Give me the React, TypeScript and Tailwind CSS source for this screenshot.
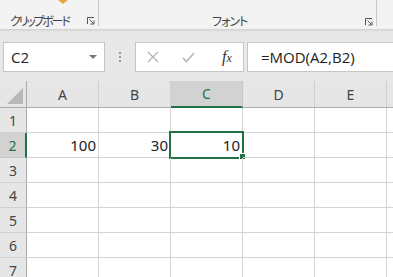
import React from "react";

const Launcher = () => (
  <svg width="8" height="8" viewBox="0 0 8 8" className="block">
    <path d="M0.5 7V0.5H7" fill="none" stroke="#555" strokeWidth="1" />
    <path d="M2.5 2.5L6.5 6.5" fill="none" stroke="#555" strokeWidth="1" />
    <path d="M7 3.5V7H3.5" fill="none" stroke="#555" strokeWidth="1" />
  </svg>
);

const cols = ["A", "B", "C", "D", "E", ""];
const rows = [1, 2, 3, 4, 5, 6, 7];

export default function App() {
  return (
    <div className="w-[393px] h-[277px] overflow-hidden bg-white flex flex-col">
      {/* Ribbon */}
      <div className="h-[29px] shrink-0 bg-[#f3f3f3] flex text-[#444] [font-family:'Noto_Sans_CJK_JP',sans-serif] [font-feature-settings:'palt'] text-[12px] leading-[16px]">
        <div className="relative w-[98px] flex items-end">
          <div className="absolute left-[58px] top-0 w-0 h-0 border-l-[5px] border-r-[5px] border-t-[4px] border-l-transparent border-r-transparent border-t-[#e8a73e]" />
          <span className="pl-[10px] tracking-[-2.2px] whitespace-nowrap">クリップボード</span>
          <div className="ml-auto mr-[3px] mb-[4px]">
            <Launcher />
          </div>
        </div>
        <div className="w-px h-[26px] bg-[#c8c8c8]" />
        <div className="w-[277px] flex items-end">
          <span className="ml-[113px] tracking-[-1px] whitespace-nowrap">フォント</span>
          <div className="ml-auto mr-[3px] mb-[3px]">
            <Launcher />
          </div>
        </div>
        <div className="w-px h-[26px] bg-[#c8c8c8]" />
        <div className="flex-1" />
      </div>

      {/* Formula bar */}
      <div className="h-[52px] shrink-0 bg-[#e8e8e8] relative flex items-start pt-[13px] [font-family:'Open_Sans',sans-serif]">
        <div className="absolute left-0 right-0 top-0 h-[3px] bg-gradient-to-b from-[#cfcfcf] to-[#e8e8e8]" />
        <div className="ml-[3px] w-[102px] h-[30px] bg-white border border-[#c6c6c6] flex items-center">
          <span className="pl-[7px] text-[15px] text-[#222]">C2</span>
          <div className="ml-auto mr-[7px] w-0 h-0 border-l-[4px] border-r-[4px] border-t-[4px] border-l-transparent border-r-transparent border-t-[#777]" />
        </div>
        <div className="ml-[14px] h-[30px] flex flex-col items-center justify-center gap-[2px]">
          <div className="w-[2px] h-[2px] bg-[#9a9a9a]" />
          <div className="w-[2px] h-[2px] bg-[#9a9a9a]" />
          <div className="w-[2px] h-[2px] bg-[#9a9a9a]" />
        </div>
        <div className="ml-[14px] w-[109px] h-[30px] bg-white border border-[#c6c6c6] flex items-center">
          <div className="w-[34px] flex justify-center">
            <svg width="12" height="12" viewBox="0 0 12 12">
              <path d="M1 1L11 11M11 1L1 11" stroke="#b4b4b4" strokeWidth="1.3" />
            </svg>
          </div>
          <div className="w-[36px] flex justify-center">
            <svg width="13" height="11" viewBox="0 0 13 11">
              <path d="M1 6L4.5 9.5L12 1" fill="none" stroke="#b4b4b4" strokeWidth="1.6" />
            </svg>
          </div>
          <div className="flex-1 pl-[16px] [font-family:'Liberation_Serif',serif] italic text-[#333] leading-none">
            <span className="text-[16px]">f</span>
            <span className="text-[12px]">x</span>
          </div>
        </div>
        <div className="ml-[3px] flex-1 h-[30px] bg-white border border-r-0 border-[#c6c6c6] flex items-center">
          <span className="pl-[13px] text-[15px] text-[#222] whitespace-nowrap">=MOD(A2,B2)</span>
        </div>
      </div>

      {/* Grid */}
      <div className="flex flex-col [font-family:'Noto_Sans',sans-serif] text-[#444]">
        <div className="h-[27px] flex shrink-0">
          <div className="w-[27px] shrink-0 bg-[#e6e6e6] border-r border-b border-[#ababab] relative">
            <svg className="absolute right-[3px] bottom-[3px]" width="16" height="16" viewBox="0 0 16 16">
              <path d="M16 0V16H0Z" fill="#b8b8b8" />
            </svg>
          </div>
          {cols.map((c, i) =>
            c === "C" ? (
              <div
                key={i}
                className="w-[72px] shrink-0 bg-[#d2d2d2] border-r border-[#c6c6c6] border-b-2 border-b-[#217346] flex items-center justify-center text-[14px] text-[#217346]"
              >
                {c}
              </div>
            ) : (
              <div
                key={i}
                className="w-[72px] shrink-0 bg-[#e6e6e6] border-r border-[#d0d0d0] border-b border-b-[#ababab] flex items-center justify-center text-[14px]"
              >
                {c}
              </div>
            )
          )}
        </div>
        {rows.map((r) => (
          <div key={r} className="h-[25px] flex shrink-0">
            {r === 2 ? (
              <div className="w-[27px] shrink-0 bg-[#d2d2d2] border-r-2 border-r-[#217346] border-b border-b-[#c6c6c6] flex items-center justify-center text-[14px] text-[#217346]">
                {r}
              </div>
            ) : (
              <div className="w-[27px] shrink-0 bg-[#e6e6e6] border-r border-r-[#ababab] border-b border-b-[#d0d0d0] flex items-center justify-center text-[14px]">
                {r}
              </div>
            )}
            {cols.map((c, i) => {
              let val = "";
              if (r === 2 && c === "A") val = "100";
              if (r === 2 && c === "B") val = "30";
              if (r === 2 && c === "C") val = "10";
              const sel = r === 2 && c === "C";
              return (
                <div
                  key={i}
                  className="relative w-[72px] shrink-0 border-r border-b border-[#d4d4d4] flex items-center justify-end pr-[2px] text-[15px] text-[#222]"
                >
                  {val}
                  {sel && (
                    <>
                      <div className="absolute left-[-2px] top-[-2px] w-[75px] h-[28px] border-2 border-[#217346]" />
                      <div className="absolute left-[68px] top-[20px] w-[7px] h-[7px] bg-[#217346] border border-white" />
                    </>
                  )}
                </div>
              );
            })}
          </div>
        ))}
      </div>
    </div>
  );
}
